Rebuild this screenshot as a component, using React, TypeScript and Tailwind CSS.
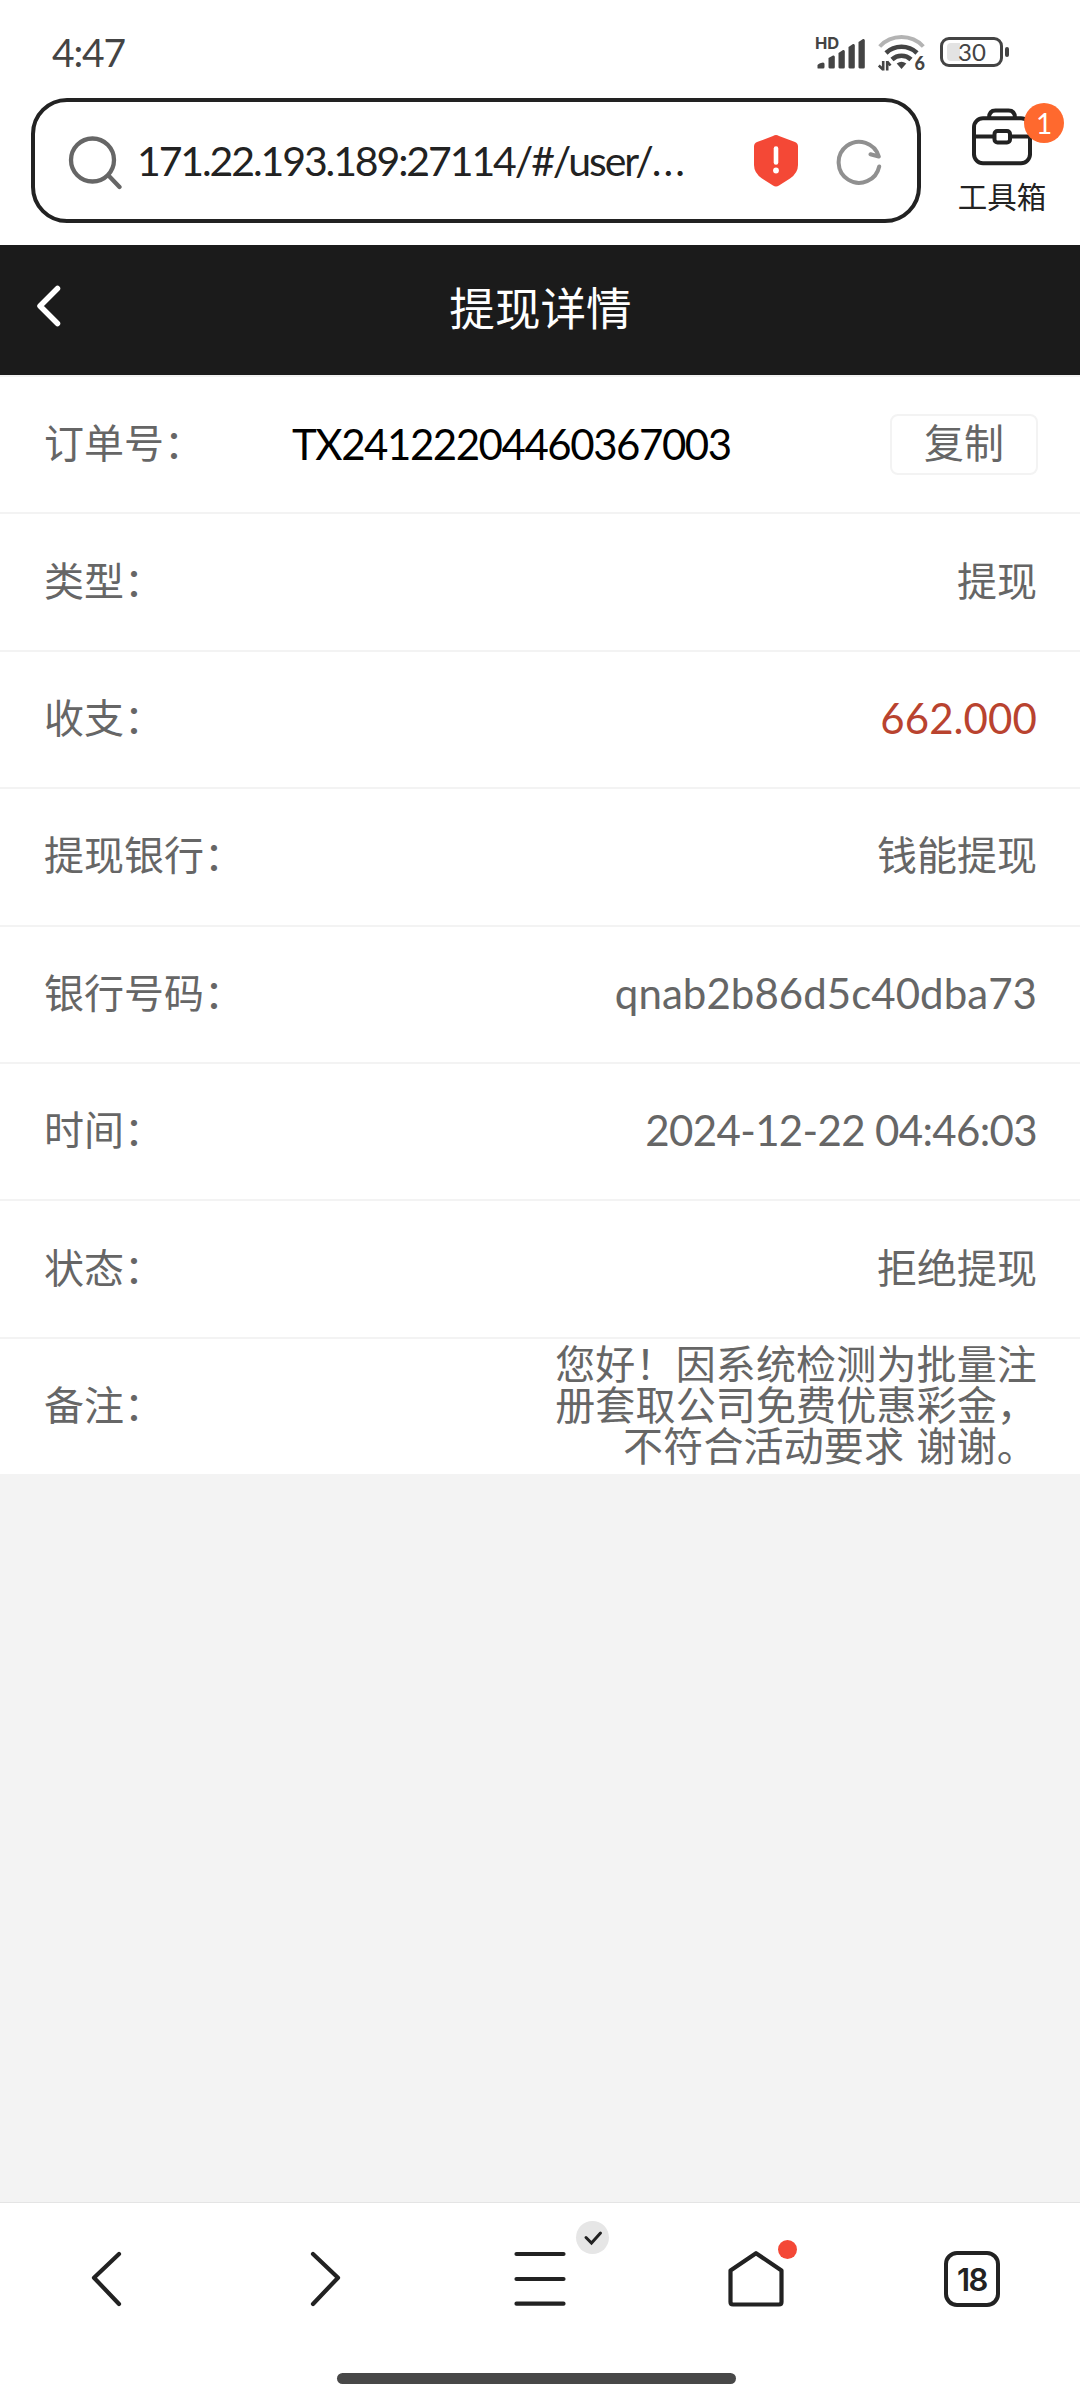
import type { ReactNode } from 'react';
import clsx from 'clsx';

type DetailRow = {
  label: string;
  value: string;
  className?: string;
};

const rows: DetailRow[] = [
  { label: '类型：', value: '提现' },
  { label: '收支：', value: '662.000', className: '-top-px text-[#b9432f] text-[42px] tracking-[0.1px]' },
  { label: '提现银行：', value: '钱能提现' },
  { label: '银行号码：', value: 'qnab2b86d5c40dba73', className: '-top-px text-[42px] tracking-[0.05px]' },
  { label: '时间：', value: '2024-12-22 04:46:03', className: '-top-px text-[42px] tracking-[-0.65px]' },
  { label: '状态：', value: '拒绝提现' },
];

const remark = ['您好！因系统检测为批量注', '册套取公司免费优惠彩金，', '不符合活动要求 谢谢。'];

function SignalBars() {
  return (
    <svg className="mt-[2.5px] overflow-visible" width="50" height="34" viewBox="0 0 50 34" fill="#444">
      <path d="M1.5 32V29.5Q1.5 28 5 27L7 26.500Q8.500 26.500 8.500 28V31Q8.500 32.500 7 32.500H2.500Q1.500 32.500 1.500 32Z" />
      <path d="M12.5 31.5V22L17 19.5Q18.8 19 18.8 21V31Q18.8 32.5 17.5 32.5H13.5Z" />
      <path d="M22.5 31.5V17L27 14Q28.8 13.5 28.8 15.5V31Q28.8 32.5 27.5 32.5H23.5Z" />
      <path d="M32.5 31.5V11L37 8Q38.8 7.5 38.8 9.5V31Q38.8 32.5 37.5 32.5H33.5Z" />
      <path d="M42.5 31.5V6L47 3Q48.8 2.5 48.8 4.500V31Q48.800 32.500 47.500 32.500H43.500Z" />
      <text x="-1" y="12.500" fontSize="16.500" fontWeight="700" fontFamily="Inter, sans-serif">
        HD
      </text>
    </svg>
  );
}

function WifiIcon() {
  return (
    <svg className="overflow-visible" width="48" height="38" viewBox="0 0 48 38" fill="none" stroke="#444" strokeWidth="4.600">
      <path d="M1.700 13.500a30 30 0 0 1 43.600 0" stroke="#b3b3b3" strokeWidth="4" />
      <path d="M8 20a22.500 22.500 0 0 1 31 0" />
      <path d="M14 26.500a14 14 0 0 1 19 0" />
      <path d="M18.700 30.500q4.800-3.500 9.600 0l-4.800 5.500z" fill="#444" stroke="none" />
      <path d="M5.200 28v9.500M.8 32.500l4.400 4.200M9.200 37.500V28M9.200 28.500l3.300 4" strokeWidth="2.600" />
      <text x="36.500" y="37" fontSize="18" fontWeight="900" fill="#444" stroke="none" fontFamily="Lato, sans-serif">
        6
      </text>
    </svg>
  );
}

function StatusBar() {
  return (
    <div className="flex h-[98px] items-start justify-between pt-[33px] pr-[71px] pl-[52px] text-[#444]">
      <span className="text-[39px] leading-[38px] tracking-[-1.2px]">4:47</span>
      <div className="flex items-start">
        <SignalBars />
        <div className="ml-[12px]">
          <WifiIcon />
        </div>
        <div className="mt-[4px] ml-[14px] flex items-center">
          <div className="relative flex h-[30px] w-[63px] items-center rounded-[9px] border-[3px] border-[#444] pl-[4px]">
            <div className="h-[18px] w-[13px] rounded-l-[4px] bg-[#e3e3e3]" />
            <span className="absolute left-[15px] text-[24px] leading-[24px]">30</span>
          </div>
          <div className="ml-[2px] h-[10px] w-[4px] rounded-[2px] bg-[#444]" />
        </div>
      </div>
    </div>
  );
}

function AddressBar() {
  return (
    <div className="flex h-[147px] items-start pl-[31px]">
      <div className="flex h-[125px] w-[890px] items-center rounded-[36px] border-[4px] border-[#222] pl-[32px]">
        <svg width="58" height="58" viewBox="0 0 58 58" fill="none" stroke="#666" strokeWidth="4.3" strokeLinecap="round">
          <circle cx="25.5" cy="28" r="21.5" />
          <path d="M41.5 43.5L52.5 55" />
        </svg>
        <span className="ml-[12px] w-[600px] text-[41px] leading-[50px] tracking-[-2.1px] whitespace-nowrap text-[#222]">
          171.22.193.189:27114/#/user/<span className="tracking-[2px]">...</span>
        </span>
        <svg className="ml-[17px]" width="44" height="52" viewBox="0 0 44 52">
          <path
            d="M22 0q1.500 0 3 1L41 7q3 1.200 3 4.500V30q0 8-8 13.500L25 50.500q-3 2-6 0L8 43.500Q0 38 0 30V11.500Q0 8.200 3 7L19 1q1.500-1 3-1z"
            fill="#f44836"
          />
          <path d="M22 13.5v14" stroke="#fff" strokeWidth="4.6" strokeLinecap="round" />
          <circle cx="22" cy="35.5" r="2.9" fill="#fff" />
        </svg>
        <svg className="ml-[37px]" width="48" height="48" viewBox="0 0 48 48" fill="none" stroke="#909090" strokeWidth="4" strokeLinecap="round">
          <path d="M44.2 29.5A20.5 20.5 0 1 1 43.8 19.5L35.500 17.300" strokeLinejoin="round" />
        </svg>
      </div>
      <div className="relative ml-[38px] flex w-[86px] flex-col items-center pt-[9px]">
        <svg width="62" height="60" viewBox="0 0 62 60" fill="none" stroke="#222" strokeWidth="4">
          <rect x="3" y="11.3" width="56" height="45" rx="9" />
          <path d="M18 11q0-7.500 6.500-7.500h13q6.500 0 6.500 7.500M3 29.500h56" />
          <rect x="23.5" y="24" width="15.5" height="11.5" rx="3" fill="#fff" />
        </svg>
        <span className="mt-[15px] text-[29.5px] leading-[30px] whitespace-nowrap text-[#222]">工具箱</span>
        <span className="absolute top-[5px] left-[65px] flex size-[40px] items-center justify-center rounded-full bg-[#ff692e] text-[28px] leading-none text-white">
          1
        </span>
      </div>
    </div>
  );
}

function Row({ label, children }: { label: string; children: ReactNode }) {
  return (
    <div className="flex min-h-0 flex-1 items-center border-t-2 border-[#f3f3f3] bg-white pr-[43px] pl-[44px] text-[40px] leading-[40.8px] text-[#666]">
      <span className="relative -top-px shrink-0">{label}</span>
      {children}
    </div>
  );
}

function NavIcon({ children }: { children: ReactNode }) {
  return (
    <svg width="60" height="60" viewBox="0 0 60 60" fill="none" stroke="#222" strokeWidth="4.2" strokeLinecap="round" strokeLinejoin="round">
      {children}
    </svg>
  );
}

function BottomNav() {
  return (
    <div className="flex h-[198px] flex-col items-center border-t border-[#e4e4e4] bg-white">
      <div className="grid w-full grid-cols-5 justify-items-center pt-[46px]">
        <NavIcon>
          <path d="M41 5L16 28.7L41 55" />
        </NavIcon>
        <NavIcon>
          <path d="M19 5L44 28.7L19 55" />
        </NavIcon>
        <div className="relative">
          <NavIcon>
            <path d="M6.5 5h47M6.5 30h47M6.5 54.700h47" />
          </NavIcon>
          <div className="absolute -top-[28px] left-[66px] flex size-[33px] items-center justify-center rounded-full bg-[#e6e6e6]">
            <svg width="20" height="16" viewBox="0 0 20 16" fill="none" stroke="#222" strokeWidth="3" strokeLinecap="round">
              <path d="M3 7.5L8.5 13L17.500 3" />
            </svg>
          </div>
        </div>
        <div className="relative">
          <NavIcon>
            <path d="M30 4.2L55.5 21.5V53q0 2.500-2.500 2.500H7Q4.500 55.500 4.500 53V21.500Z" />
          </NavIcon>
          <div className="absolute -top-[9px] left-[52px] size-[19px] rounded-full bg-[#f44836]" />
        </div>
        <div className="mt-[2px] flex size-[56px] items-center justify-center rounded-[13px] border-[4px] border-[#222] font-['Inter'] text-[31px] leading-none font-semibold tracking-[-1.5px] text-[#222]">
          18
        </div>
      </div>
      <div className="mt-[64px] mr-[7px] h-[11px] w-[399px] rounded-full bg-[#484848]" />
    </div>
  );
}

export default function App() {
  return (
    <div className="flex h-[2400px] w-[1080px] flex-col overflow-hidden bg-white font-['Lato','Noto_Sans_CJK_SC',sans-serif]">
      <StatusBar />
      <AddressBar />

      <div className="flex h-[130px] shrink-0 items-center bg-[#1b1b1b] px-[36px] text-white">
        <svg className="-mt-[8px]" width="26" height="42" viewBox="0 0 26 42" fill="none" stroke="#fff" strokeWidth="5.5" strokeLinecap="round" strokeLinejoin="round">
          <path d="M21.5 3.5L4 21L21.5 38.5" />
        </svg>
        <h1 className="-mt-[3px] mr-[25px] flex-1 text-center text-[45.6px] leading-[60px]">提现详情</h1>
      </div>

      <div className="flex h-[1099px] shrink-0 flex-col">
        <Row label="订单号：">
          <span className="ml-[88px] text-[42px] tracking-[-1.45px] text-black">TX24122204460367003</span>
          <button className="-mr-[1px] ml-auto h-[61px] w-[148px] rounded-[8px] border-2 border-[#f3f3f3] pb-[2px]">
            复制
          </button>
        </Row>
        {rows.map((row) => (
          <Row key={row.label} label={row.label}>
            <span className={clsx('relative ml-auto', row.className ?? '-top-px')}>{row.value}</span>
          </Row>
        ))}
        <Row label="备注：">
          <p className="relative -top-px ml-auto text-right tracking-[0.15px] [word-spacing:2px]">
            {remark.map((line) => (
              <span key={line} className="block">
                {line}
              </span>
            ))}
          </p>
        </Row>
      </div>

      <div className="flex-1 bg-[#f3f3f3]" />
      <BottomNav />
    </div>
  );
}
